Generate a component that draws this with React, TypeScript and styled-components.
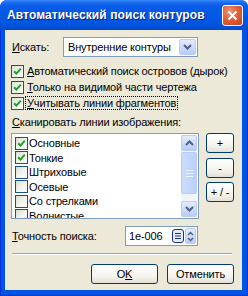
import React from 'react'
import styled, { createGlobalStyle } from 'styled-components'

const GlobalStyle = createGlobalStyle`
  html, body {
    margin: 0;
    padding: 0;
    background: #ffffff;
  }
  body {
    font-family: "Liberation Sans", Arial, sans-serif;
    font-size: 11px;
    letter-spacing: -0.15px;
    color: #000000;
  }
`

const Window = styled.div`
  width: 248px;
  height: 296px;
  display: flex;
  flex-direction: column;
  background: #0054e3;
  border-radius: 7px 7px 0 0;
  overflow: hidden;
`

const TitleBar = styled.div`
  height: 30px;
  flex: none;
  display: flex;
  align-items: center;
  justify-content: space-between;
  padding: 0 5px 0 7px;
  box-sizing: border-box;
  background: linear-gradient(
    to bottom,
    #3b8cf9 0%,
    #1b6ef0 8%,
    #0a5ce8 20%,
    #0058e6 50%,
    #0056e0 80%,
    #0049cc 100%
  );
`

const Title = styled.span`
  font-family: "Liberation Sans", Arial, sans-serif;
  font-weight: bold;
  font-size: 12px;
  letter-spacing: 0.1px;
  white-space: nowrap;
  color: #ffffff;
  text-shadow: 1px 1px 0 #0a1f7a;
`

const CloseButton = styled.div`
  width: 21px;
  height: 21px;
  flex: none;
  box-sizing: border-box;
  border: 1px solid #ffffff;
  border-radius: 3px;
  background: radial-gradient(circle at 35% 30%, #f0957a 0%, #e2603a 45%, #c8401e 100%);
  display: flex;
  align-items: center;
  justify-content: center;
`

const Frame = styled.div`
  flex: 1;
  display: flex;
  padding: 0 5px 5px 4px;
  border-left: 1px solid #0831d9;
  border-right: 1px solid #0831d9;
  border-bottom: 1px solid #0831d9;
  box-sizing: border-box;
`

const Client = styled.div`
  flex: 1;
  background: #ece9d8;
  display: flex;
  flex-direction: column;
  padding: 7px 0 0 6px;
  box-sizing: border-box;
`

const Row = styled.div<{ $top?: number; $height?: number }>`
  display: flex;
  align-items: center;
  margin-top: ${({ $top }) => $top ?? 0}px;
  height: ${({ $height }) => $height ?? 16}px;
`

const CheckGroup = styled.div`
  display: flex;
  flex-direction: column;
  margin-top: 6px;
`

const Label = styled.span<{ $width?: number }>`
  display: inline-block;
  width: ${({ $width }) => ($width ? `${$width}px` : 'auto')};
  padding-left: 1px;
  white-space: nowrap;
`

const U = styled.span`
  text-decoration: underline;
`

const Combo = styled.div`
  width: 135px;
  height: 20px;
  box-sizing: border-box;
  border: 1px solid #7f9db9;
  background: #ffffff;
  display: flex;
  align-items: center;
  padding: 1px;
`

const ComboText = styled.span`
  flex: 1;
  padding-left: 3px;
`

const BlueButton = styled.div<{ $w: number; $h: number; $stack?: boolean }>`
  width: ${({ $w }) => $w}px;
  height: ${({ $h }) => $h}px;
  flex: none;
  box-sizing: border-box;
  border: 1px solid #b9cdf7;
  border-radius: 2px;
  background: linear-gradient(to bottom, #e4ecfd 0%, #c9d9fb 60%, #b7cbf8 100%);
  display: flex;
  flex-direction: ${({ $stack }) => ($stack ? 'column' : 'row')};
  gap: ${({ $stack }) => ($stack ? 1 : 0)}px;
  align-items: center;
  justify-content: center;
`

const CheckRow = styled.div`
  display: flex;
  align-items: center;
  height: 16px;
  white-space: nowrap;
`

const Box = styled.div`
  width: 13px;
  height: 13px;
  flex: none;
  box-sizing: border-box;
  border: 1px solid #1c5180;
  background: linear-gradient(135deg, #dcdcd6 0%, #f4f4f0 55%, #ffffff 100%);
  display: flex;
  align-items: center;
  justify-content: center;
`

const CheckText = styled.span<{ $focus?: boolean }>`
  margin-left: 1px;
  padding: 0 1px;
  border: 1px dotted ${({ $focus }) => ($focus ? '#000000' : 'transparent')};
  line-height: 12px;
`

const Split = styled.div`
  display: flex;
  margin-top: 3px;
`

const ListBox = styled.div`
  width: 188px;
  height: 86px;
  box-sizing: border-box;
  border: 1px solid #7f9db9;
  background: #ffffff;
  display: flex;
  overflow: hidden;
`

const Items = styled.div`
  flex: 1;
  padding: 2px 0 0 3px;
  overflow: hidden;
`

const Item = styled.div`
  display: flex;
  align-items: center;
  height: 14.5px;
  white-space: nowrap;
`

const ItemText = styled.span`
  margin-left: 1px;
`

const ScrollBar = styled.div`
  width: 16px;
  flex: none;
  margin: 1px 1px 1px 0;
  background: #f2f4fb;
  display: flex;
  flex-direction: column;
  gap: 1px;
`

const Thumb = styled.div`
  height: 42px;
  box-sizing: border-box;
  border: 1px solid #b9cdf7;
  border-radius: 2px;
  background: linear-gradient(to right, #cbdbfc 0%, #bcd0fa 100%);
  display: flex;
  align-items: center;
  justify-content: center;
`

const Track = styled.div`
  flex: 1;
`

const SideButtons = styled.div`
  display: flex;
  flex-direction: column;
  gap: 4.5px;
  margin-left: 7px;
`

const PushButton = styled.div<{ $w: number; $h?: number }>`
  width: ${({ $w }) => $w}px;
  height: ${({ $h }) => $h ?? 20}px;
  box-sizing: border-box;
  border: 1px solid #003c74;
  border-radius: 3px;
  background: linear-gradient(to bottom, #ffffff 0%, #f5f4ef 60%, #e3e1d6 100%);
  display: flex;
  align-items: center;
  justify-content: center;
  white-space: nowrap;
`

const Field = styled.div`
  width: 73px;
  height: 20px;
  box-sizing: border-box;
  border: 1px solid #7f9db9;
  background: #ffffff;
  display: flex;
  align-items: center;
  padding: 1px;
`

const FieldText = styled.span`
  flex: 1;
  padding-left: 2px;
`

const MenuButton = styled.div`
  width: 12px;
  height: 14px;
  box-sizing: border-box;
  border: 1px solid #1c2f8f;
  border-radius: 3px;
  background: #e6ecfb;
  display: flex;
  align-items: center;
  justify-content: center;
  margin-right: 1px;
`

const Separator = styled.div`
  width: 220px;
  margin-top: 7px;
  margin-left: 1px;
  border-top: 1px solid #aca899;
  border-bottom: 1px solid #ffffff;
`

const Footer = styled.div`
  display: flex;
  gap: 9px;
  margin-top: 9px;
  padding-left: 80px;
`

const Check = () => (
  <svg width="9" height="9" viewBox="0 0 9 9">
    <polyline points="1.2,4.2 3.4,6.6 7.8,1.6" fill="none" stroke="#21a121" strokeWidth="2" />
  </svg>
)

const Chevron = ({ up }: { up?: boolean }) => (
  <svg width="9" height="6" viewBox="0 0 9 6">
    <polyline
      points={up ? '1,5 4.5,1.5 8,5' : '1,1 4.5,4.5 8,1'}
      fill="none"
      stroke="#4d6185"
      strokeWidth="2"
    />
  </svg>
)

const SmallChevron = ({ up }: { up?: boolean }) => (
  <svg width="7" height="5" viewBox="0 0 7 5">
    <polyline
      points={up ? '1,4 3.5,1.5 6,4' : '1,1 3.5,3.5 6,1'}
      fill="none"
      stroke="#4d6185"
      strokeWidth="1.5"
    />
  </svg>
)

const CheckBox: React.FC<{ checked?: boolean }> = ({ checked }) => (
  <Box>{checked && <Check />}</Box>
)

const items: { name: string; checked: boolean }[] = [
  { name: 'Основные', checked: true },
  { name: 'Тонкие', checked: true },
  { name: 'Штриховые', checked: false },
  { name: 'Осевые', checked: false },
  { name: 'Со стрелками', checked: false },
  { name: 'Волнистые', checked: false },
]

export default function App() {
  return (
    <>
      <GlobalStyle />
      <Window>
        <TitleBar>
          <Title>Автоматический поиск контуров</Title>
          <CloseButton>
            <svg width="11" height="11" viewBox="0 0 11 11">
              <path d="M1.5 1.5 L9.5 9.5 M9.5 1.5 L1.5 9.5" stroke="#ffffff" strokeWidth="2" />
            </svg>
          </CloseButton>
        </TitleBar>
        <Frame>
          <Client>
            <Row $height={20}>
              <Label $width={51}>
                <U>И</U>скать:
              </Label>
              <Combo>
                <ComboText>Внутренние контуры</ComboText>
                <BlueButton $w={17} $h={16}>
                  <Chevron />
                </BlueButton>
              </Combo>
            </Row>
            <CheckGroup>
              <CheckRow>
                <CheckBox checked />
                <CheckText>
                  <U>А</U>втоматический поиск островов (дырок)
                </CheckText>
              </CheckRow>
              <CheckRow>
                <CheckBox checked />
                <CheckText>
                  <U>Т</U>олько на видимой части чертежа
                </CheckText>
              </CheckRow>
              <CheckRow>
                <CheckBox checked />
                <CheckText $focus>
                  <U>У</U>читывать линии фрагментов
                </CheckText>
              </CheckRow>
            </CheckGroup>
            <Row $top={3} $height={16}>
              <Label>
                <U>С</U>канировать линии изображения:
              </Label>
            </Row>
            <Split>
              <ListBox>
                <Items>
                  {items.map((it) => (
                    <Item key={it.name}>
                      <CheckBox checked={it.checked} />
                      <ItemText>{it.name}</ItemText>
                    </Item>
                  ))}
                </Items>
                <ScrollBar>
                  <BlueButton $w={16} $h={16}>
                    <Chevron up />
                  </BlueButton>
                  <Thumb>
                    <svg width="7" height="7" viewBox="0 0 7 7">
                      <path d="M0 0.5H7M0 3.5H7M0 6.5H7" stroke="#eef3fe" strokeWidth="1" />
                    </svg>
                  </Thumb>
                  <Track />
                  <BlueButton $w={16} $h={16}>
                    <Chevron />
                  </BlueButton>
                </ScrollBar>
              </ListBox>
              <SideButtons>
                <PushButton $w={28}>+</PushButton>
                <PushButton $w={28}>-</PushButton>
                <PushButton $w={28}>+ / -</PushButton>
              </SideButtons>
            </Split>
            <Row $top={7} $height={20}>
              <Label $width={113}>
                <U>Т</U>очность поиска:
              </Label>
              <Field>
                <FieldText>1e-006</FieldText>
                <MenuButton>
                  <svg width="6" height="6" viewBox="0 0 6 6">
                    <path d="M0 0.5H6M0 3H6M0 5.5H6" stroke="#1c2f8f" strokeWidth="1.2" />
                  </svg>
                </MenuButton>
                <BlueButton $w={11} $h={16} $stack>
                  <SmallChevron up />
                  <SmallChevron />
                </BlueButton>
              </Field>
            </Row>
            <Separator />
            <Footer>
              <PushButton $w={67}>
                O<U>K</U>
              </PushButton>
              <PushButton $w={67}>Отменить</PushButton>
            </Footer>
          </Client>
        </Frame>
      </Window>
    </>
  )
}
